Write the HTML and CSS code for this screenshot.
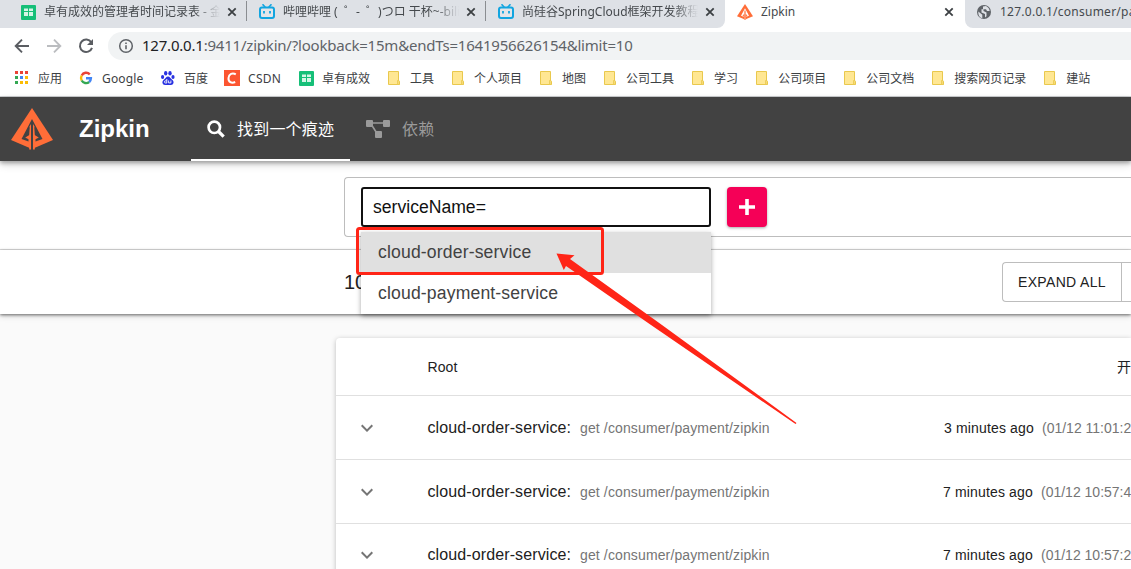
FILE: index.html
```html
<!DOCTYPE html>
<html lang="zh-CN">
<head>
<meta charset="utf-8">
<title>Zipkin</title>
<link rel="stylesheet" href="styles.css">
</head>
<body>
<svg width="0" height="0" class="defs">
  <symbol id="close" viewBox="0 0 14 14"><path d="M3.3 3.3l7.4 7.4M10.7 3.3l-7.4 7.4" stroke="#3c4043" stroke-width="1.8"/></symbol>
  <symbol id="sheet" viewBox="0 0 16 16"><rect x="1" y="1" width="15" height="15" rx="1" fill="#16bf78"/><path d="M4 4.500h4v2.500H4zM9 4.500h4v2.500H9zM4 8h4v4H4zM9 8h4v4H9z" fill="#d5f5e6"/></symbol>
  <symbol id="bili" viewBox="0 0 16 16"><path d="M4 .8l2 2.2M12 .8L10 3" stroke="#12a5e0" stroke-width="1.7" stroke-linecap="round"/><rect x="1" y="3.6" width="14" height="10.4" rx="2" fill="#fff" fill-opacity=".15" stroke="#12a5e0" stroke-width="2"/><path d="M5 7v2.4M11 7v2.4" stroke="#12a5e0" stroke-width="1.8"/></symbol>
  <symbol id="zipkin" viewBox="0 0 42 42"><path d="M21 0l21 32-21 9L0 32z" fill="#ff6d38"/><path d="M21 11l-10.500 20 7 2.600v-2.400l-3.300-1.600 5-3.200V41h3.600V26.400l5 3.200-3.300 1.600v2.400l7-2.600z" fill="var(--cut)"/><path d="M18.200 19v22.500h1.800V16zM23.800 19v22.500H22V16z" fill="#ff6d38"/><path d="M18.800 18l-5 11 4.200-2.500zM23.200 18l5 11-4.200-2.500z" fill="var(--cut)"/></symbol>
  <symbol id="folder" viewBox="0 0 16 16"><path d="M2.500 1.500h10v10h1v3h-11z" fill="#ffe793" stroke="#e9c84d"/><path d="M11.500 14.500v-4h1.500v4z" fill="#ffe793" stroke="#e9c84d" stroke-width=".8"/></symbol>
  <symbol id="chevron" viewBox="0 0 24 24"><path d="M7.400 8.600L12 13.200l4.600-4.600L18 10l-6 6-6-6z" fill="#757575"/></symbol>
</svg>

<div class="tabstrip">
  <div class="tabs-left">
    <div class="tab"><svg class="i16"><use href="#sheet"/></svg><span class="tab-title fade">卓有成效的管理者时间记录表 - 金</span><svg class="i14"><use href="#close"/></svg></div>
    <div class="tab"><svg class="i16"><use href="#bili"/></svg><span class="tab-title fade">哔哩哔哩 (&nbsp; ゜-&nbsp; ゜)つロ 干杯~-bilib</span><svg class="i14"><use href="#close"/></svg></div>
    <div class="tab last"><svg class="i16"><use href="#bili"/></svg><span class="tab-title fade">尚硅谷SpringCloud框架开发教程</span><svg class="i14"><use href="#close"/></svg></div>
  </div>
  <div class="tab active"><svg class="i16 cut-white"><use href="#zipkin"/></svg><span class="tab-title">Zipkin</span><svg class="i14"><use href="#close"/></svg></div>
  <div class="tabs-right">
    <svg class="i16" viewBox="0 0 16 16"><circle cx="8" cy="8" r="7" fill="#5f6368"/><path d="M2.300 7.500l4 3.300v3.500C3.500 13.500 2 11 2.300 7.500zM7 2.500l3-.4c2 1 3.500 2.700 3.700 5H11l-1-1.800H7.500V7l3 1.500v3.800L9 13.500V10L5.500 8.500V5.300H7z" fill="#dee1e6"/></svg>
    <span class="tab-title address">127.0.0.1/consumer/pa</span>
  </div>
</div>

<div class="toolbar">
  <svg class="nav" viewBox="0 0 16 16"><path d="M15 8H2.500M8 1.700L1.700 8 8 14.300" fill="none" stroke="#5a5d62" stroke-width="1.9"/></svg>
  <svg class="nav" viewBox="0 0 16 16"><path d="M1 8h12.500M8 1.700L14.300 8 8 14.300" fill="none" stroke="#bbbdc0" stroke-width="1.9"/></svg>
  <svg class="nav" viewBox="0 0 16 16"><path d="M13.300 4.300A6.200 6.200 0 1 0 14 9.800" fill="none" stroke="#5a5d62" stroke-width="2"/><path d="M15 1v6H9z" fill="#5a5d62"/></svg>
  <div class="omnibox">
    <svg class="i16" viewBox="0 0 16 16"><circle cx="8" cy="8" r="6.300" fill="none" stroke="#5f6368" stroke-width="1.500"/><path d="M8 7.200v4M8 4.500v1.600" stroke="#5f6368" stroke-width="1.600"/></svg>
    <span class="url"><b>127.0.0.1</b>:9411/zipkin/?lookback=15m&amp;endTs=1641956626154&amp;limit=10</span>
  </div>
</div>

<div class="bookmarks">
  <div class="bm"><svg class="i16" viewBox="0 0 16 16"><path d="M1 1h3v3H1zM6 1h3v3H6zM11 1h3v3h-3z" fill="#ea4335"/><path d="M1 6h3v3H1z" fill="#34a853"/><path d="M6 6h3v3H6z" fill="#4285f4"/><path d="M11 6h3v3h-3z" fill="#fbbc05"/><path d="M1 11h3v3H1z" fill="#34a853"/><path d="M6 11h3v3H6zM11 11h3v3h-3z" fill="#fbbc05"/></svg><span>应用</span></div>
  <div class="bm"><svg class="i16" viewBox="0 0 16 16"><g fill="none" stroke-width="2.400"><path d="M11.800 4.300A5 5 0 0 0 3.700 5.500" stroke="#ea4335"/><path d="M3.700 5.500a5 5 0 0 0 0 5" stroke="#fbbc05"/><path d="M3.700 10.500a5 5 0 0 0 7.500 1.500" stroke="#34a853"/><path d="M11.200 12a5 5 0 0 0 1.700-3.700H8" stroke="#4285f4"/></g></svg><span class="w-google">Google</span></div>
  <div class="bm"><svg class="i16" viewBox="0 0 16 16"><g fill="#2932e1"><ellipse cx="5.700" cy="3.300" rx="1.700" ry="2.300"/><ellipse cx="10" cy="3.300" rx="1.700" ry="2.300"/><ellipse cx="2.600" cy="7" rx="1.600" ry="2.100"/><ellipse cx="13" cy="7" rx="1.600" ry="2.100"/><path d="M8 6.500c2 0 2.500 2 4.200 3.300 2.500 2 1.300 5.200-1.200 5.200H5c-2.500 0-3.700-3.200-1.200-5.200C5.500 8.500 6 6.500 8 6.500z"/></g><path d="M6.800 9v4H5.600a1 1 0 0 1 0-2.200h1M8.600 10.500v2.400h2.300v-2.400" fill="none" stroke="#fff" stroke-width=".9"/></svg><span>百度</span></div>
  <div class="bm"><svg class="i16" viewBox="0 0 16 16"><path d="M0 0h16v16H0z" fill="#fc5531"/><path d="M11.800 4.300C8.500 2.300 4.800 4 4.500 8s3 5.700 6.700 4" fill="none" stroke="#fff" stroke-width="2"/></svg><span class="w-csdn">CSDN</span></div>
  <div class="bm"><svg class="i16"><use href="#sheet"/></svg><span>卓有成效</span></div>
  <div class="bm"><svg class="i16"><use href="#folder"/></svg><span>工具</span></div>
  <div class="bm"><svg class="i16"><use href="#folder"/></svg><span>个人项目</span></div>
  <div class="bm"><svg class="i16"><use href="#folder"/></svg><span>地图</span></div>
  <div class="bm"><svg class="i16"><use href="#folder"/></svg><span>公司工具</span></div>
  <div class="bm"><svg class="i16"><use href="#folder"/></svg><span>学习</span></div>
  <div class="bm"><svg class="i16"><use href="#folder"/></svg><span>公司项目</span></div>
  <div class="bm"><svg class="i16"><use href="#folder"/></svg><span>公司文档</span></div>
  <div class="bm"><svg class="i16"><use href="#folder"/></svg><span>搜索网页记录</span></div>
  <div class="bm"><svg class="i16"><use href="#folder"/></svg><span>建站</span></div>
</div>

<header class="appbar">
  <svg class="logo"><use href="#zipkin"/></svg>
  <h1 class="brand">Zipkin</h1>
  <nav class="menu">
    <a class="menu-item current"><svg width="18" height="18" viewBox="0 0 18 18"><circle cx="7.300" cy="7.300" r="5.700" fill="none" stroke="#fff" stroke-width="2.700"/><path d="M11.500 11.500l5.200 5.200" stroke="#fff" stroke-width="3.200"/></svg><span>找到一个痕迹</span></a>
    <a class="menu-item"><svg width="24" height="18" viewBox="0 0 24 18"><path d="M3 3h17M5 4l7 11" stroke="#9a9a9a" stroke-width="1.600"/><g fill="#9a9a9a"><rect width="7" height="7" rx="1"/><rect x="17" width="7" height="7" rx="1"/><rect x="9" y="11" width="7" height="7" rx="1"/></g></svg><span>依赖</span></a>
  </nav>
</header>

<section class="search">
  <div class="search-box">
    <div class="field">
      <div class="input">serviceName=</div>
      <div class="dropdown">
        <div class="option selected">cloud-order-service</div>
        <div class="option">cloud-payment-service</div>
      </div>
    </div>
    <div class="add"><svg width="16" height="16" viewBox="0 0 16 16"><path d="M8 0v16M0 8h16" stroke="#fff" stroke-width="3.600"/></svg></div>
  </div>
</section>
<section class="results-bar">
  <span class="count">10</span>
  <div class="btn-group"><span class="btn first">EXPAND ALL</span><span class="btn"></span></div>
</section>

<main class="content">
  <div class="table">
    <div class="row head"><span class="root">Root</span><span class="start">开</span></div>
    <div class="row"><svg class="chev"><use href="#chevron"/></svg><span class="svc">cloud-order-service:</span><span class="path">get /consumer/payment/zipkin</span><span class="ago">3 minutes ago</span><span class="time">(01/12 11:01:2</span></div>
    <div class="row"><svg class="chev"><use href="#chevron"/></svg><span class="svc">cloud-order-service:</span><span class="path">get /consumer/payment/zipkin</span><span class="ago shift">7 minutes ago</span><span class="time">(01/12 10:57:4</span></div>
    <div class="row third"><svg class="chev"><use href="#chevron"/></svg><span class="svc">cloud-order-service:</span><span class="path">get /consumer/payment/zipkin</span><span class="ago shift">7 minutes ago</span><span class="time">(01/12 10:57:2</span></div>
  </div>
</main>

<svg class="annotation" width="1131" height="569" viewBox="0 0 1131 569">
  <rect x="357.500" y="228.500" width="245" height="45" rx="2" fill="none" stroke="#ff2517" stroke-width="3"/>
  <path d="M556.500 253.500l18 1.800-4.500 3.700L662 325l134.500 98-1 1L651 325l-85-59-2.200 4z" fill="#ff2517"/>
</svg>
</body>
</html>
```
FILE: styles.css
```css
* { box-sizing: border-box; }
body {
  margin: 0;
  width: 1131px;
  height: 569px;
  overflow: hidden;
  background: #fafafa;
  font-family: "Liberation Sans", "Noto Sans CJK SC", sans-serif;
  color: #212121;
  white-space: nowrap;
}
.defs { position: absolute; }
svg { flex: none; display: block; }
.i16 { width: 16px; height: 16px; }
.i14 { width: 14px; height: 14px; }

.tabstrip {
  display: flex;
  height: 28px;
  background: #fff;
  font: 12px/16px "Noto Sans", "Noto Sans CJK SC", sans-serif;
  color: #45494d;
}
.tabs-left {
  display: flex;
  width: 725px;
  padding-left: 8px;
  background: #dee1e6;
  border-bottom-right-radius: 8px;
}
.tab {
  display: flex;
  align-items: center;
  width: 239px;
  padding: 0 8px 5px 12px;
  background: linear-gradient(#8a8d91, #8a8d91) right 0 top 1px / 1px 20px no-repeat;
}
.tab.last, .tab.active { background: none; }
.tab.active { width: 240px; padding-right: 9px; }
.tab-title { width: 176px; margin: 0 5px 0 8px; overflow: hidden; }
.fade { -webkit-mask-image: linear-gradient(90deg, #000 150px, transparent 176px); }
.tab-title.address { width: auto; margin-right: 0; letter-spacing: .25px; }
.tabs-right {
  display: flex;
  align-items: center;
  flex: 1;
  min-width: 0;
  padding: 0 0 5px 11px;
  overflow: hidden;
  background: #dee1e6;
  border-bottom-left-radius: 8px;
}
.cut-white { --cut: #fff; }

.toolbar {
  display: flex;
  align-items: center;
  gap: 16px;
  height: 36px;
  padding-left: 14px;
  background: #fff;
}
.nav { width: 16px; height: 16px; }
.omnibox {
  display: flex;
  align-items: center;
  gap: 8px;
  flex: 1;
  height: 28px;
  margin-left: -2px;
  padding-left: 10px;
  background: #f1f3f4;
  border-radius: 14px 0 0 14px;
}
.url { padding-bottom: 2px; font: 15px/20px "Noto Sans", sans-serif; letter-spacing: -.21px; color: #5f6368; }
.url b { font-weight: 400; color: #202124; }

.bookmarks {
  display: flex;
  align-items: center;
  gap: 16px;
  height: 33px;
  padding: 0 0 4px 14px;
  background: #fff;
  border-bottom: 1px solid #cfd1d3;
  font: 12px/16px "Noto Sans", "Noto Sans CJK SC", sans-serif;
  color: #3c4043;
}
.bm { display: flex; gap: 8px; }
.bm span { padding-top: 1px; margin-bottom: -1px; }
.w-google { width: 42px; letter-spacing: .15px; }
.w-csdn { width: 34px; letter-spacing: .3px; }

.appbar {
  position: relative;
  display: flex;
  align-items: center;
  height: 64px;
  padding-left: 11px;
  background: #424242;
  box-shadow: 0 2px 4px rgba(0,0,0,.3), 0 4px 8px rgba(0,0,0,.14);
}
.logo { width: 42px; height: 42px; --cut: #424242; }
.brand { width: 112px; margin: 0 0 0 26px; font-size: 24px; line-height: 28px; color: #fff; }
.menu { display: flex; height: 64px; }
.menu-item {
  display: flex;
  align-items: center;
  gap: 12px;
  padding: 0 16px;
  font-size: 16px;
  color: #9a9a9a;
}
.menu-item span { padding-bottom: 2px; letter-spacing: .2px; }
.menu-item.current { width: 159px; color: #fff; box-shadow: inset 0 -2px #fff; }

.search {
  height: 89px;
  padding: 16px 0 0 344px;
  background: #fff;
  border-bottom: 1px solid #dedede;
}
.search-box {
  display: flex;
  gap: 16px;
  height: 60px;
  padding: 9px 16px;
  border: 1px solid #bdbdbd;
  border-right: 0;
  border-radius: 4px 0 0 4px;
}
.field { position: relative; width: 350px; height: 40px; }
.input {
  height: 40px;
  padding-left: 10px;
  border: 2px solid #111;
  border-radius: 3px;
  font-size: 17.6px;
  line-height: 36px;
  color: #111;
}
.dropdown {
  position: absolute;
  top: 45px;
  left: 0;
  z-index: 2;
  width: 350px;
  background: #fff;
  box-shadow: 0 2px 5px rgba(0,0,0,.35);
}
.option { height: 41px; padding-left: 17px; font-size: 17.6px; line-height: 40px; letter-spacing: .15px; color: #424242; }
.option.selected { background: #e0e0e0; }
.add {
  display: grid;
  place-items: center;
  width: 40px;
  height: 40px;
  border-radius: 4px;
  background: #f50057;
  box-shadow: 0 1px 3px rgba(0,0,0,.35);
}
.results-bar {
  display: flex;
  align-items: center;
  justify-content: space-between;
  height: 64px;
  padding-left: 344px;
  background: #fff;
  box-shadow: 0 1px 3px rgba(0,0,0,.55), 0 3px 6px rgba(0,0,0,.1);
}
.count { font-size: 20px; }
.btn-group {
  display: flex;
  width: 129px;
  height: 40px;
  border: 1px solid #bdbdbd;
  border-right: 0;
  border-radius: 4px 0 0 4px;
}
.btn.first {
  width: 119px;
  padding-left: 15px;
  border-right: 1px solid #bdbdbd;
  font-size: 14px;
  line-height: 39px;
  letter-spacing: .33px;
}

.content { padding: 24px 0 0 336px; }
.table {
  border-radius: 4px 0 0 0;
  background: #fff;
  box-shadow: 0 1px 5px rgba(0,0,0,.25);
}
.row {
  display: flex;
  align-items: center;
  height: 64px;
  padding-left: 19px;
  border-bottom: 1px solid #e0e0e0;
  font-size: 14px;
  overflow: hidden;
}
.row span { flex: none; }
.row.head { height: 58px; padding-left: 91.5px; }
.row.third { padding-bottom: 2px; }
.root { width: 689.5px; letter-spacing: .1px; }
.start { width: 14px; padding-bottom: 2px; }
.chev { width: 24px; height: 24px; margin-right: 48.4px; }
.svc { width: 152.6px; font-size: 16px; letter-spacing: .12px; }
.path { width: 364px; color: #757575; letter-spacing: .13px; }
.ago { width: 98px; letter-spacing: .15px; }
.ago.shift { margin-left: -1px; }
.time { color: #757575; }
.annotation { position: absolute; inset: 0; z-index: 5; }
```
